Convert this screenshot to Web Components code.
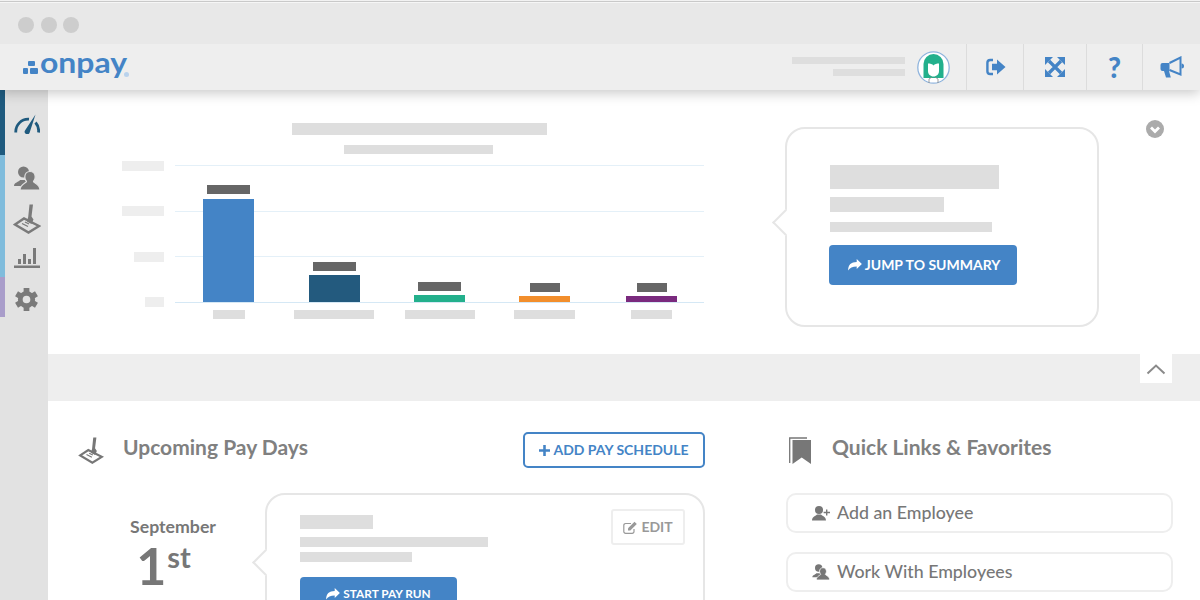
<!DOCTYPE html>
<html lang="en">
<head>
<meta charset="utf-8">
<title>OnPay dashboard</title>
<style>
  html, body { margin: 0; padding: 0; }
  body { width: 1200px; height: 600px; overflow: hidden; background: #fff; font-family: Lato, "Liberation Sans", sans-serif; }
</style>
</head>
<body>
<app-shell>
  <window-bar></window-bar>
  <top-nav></top-nav>
  <side-nav></side-nav>
  <summary-panel></summary-panel>
  <collapse-band></collapse-band>
  <div class="lower" style="display:flex;padding:31px 0 0 30px">
    <pay-days></pay-days>
    <quick-links></quick-links>
  </div>
</app-shell>

<script>
const ICONS = {
  gauge: { box: '0 0 26 20', body: `<g fill="none" stroke="currentColor" stroke-width="2.800"><path d="M1.800 18.500A12.500 12.500 0 0 1 15 5.200"/><path d="M21.500 8.500A12.500 12.500 0 0 1 24.500 18.500"/></g><path fill="currentColor" d="M11 16.500L21.500.5 15.500 19a2.500 2.500 0 0 1-4.500-2.500z"/>` },
  people: { box: '0 0 26 24', body: `<circle cx="9.500" cy="6" r="5.500" fill="currentColor"/><path fill="currentColor" d="M0 20c0-3.500 5-4 6-6h7l3 6z"/><path fill="currentColor" stroke="var(--ic-bg,#e2e2e2)" stroke-width="1.200" d="M16 5.500c3.300 0 5.200 2.500 5.200 5.500 0 2-.8 3.500-1.700 4.500 0 1.500 6.500 2.500 6.500 8.500H6c0-6 6.500-7 6.500-8.500-.9-1-1.700-2.500-1.700-4.500 0-3 1.900-5.500 5.200-5.500z"/>` },
  sign: { box: '0 0 28 30', body: `<path fill="none" stroke="currentColor" stroke-width="2.400" d="M2 20.500L11 14.500 26 22 15.500 28.500z"/><path fill="none" stroke="currentColor" stroke-width="1.300" d="M9 19.500l6 3M12 18l4 2"/><path fill="currentColor" d="M16.500.5h3.500l-1.500 12 2 3-2 4.500-4.500-2.500 1.200-4.500z"/>` },
  stats: { box: '0 0 26 21', body: `<g fill="currentColor"><rect x="0" y="18.500" width="26" height="2.500"/><rect x="4" y="12" width="3" height="5"/><rect x="9" y="7" width="3" height="10"/><rect x="14" y="12" width="3" height="5"/><rect x="19" y="1" width="3" height="16"/></g>` },
  gear: { box: '0 0 24 24', body: `<circle cx="12" cy="12" r="6.500" fill="none" stroke="currentColor" stroke-width="5"/><g fill="currentColor"><rect x="9" y="0" width="6" height="5"/><rect x="9" y="19" width="6" height="5"/><rect x="9" y="0" width="6" height="5" transform="rotate(60 12 12)"/><rect x="9" y="19" width="6" height="5" transform="rotate(60 12 12)"/><rect x="9" y="0" width="6" height="5" transform="rotate(120 12 12)"/><rect x="9" y="19" width="6" height="5" transform="rotate(120 12 12)"/></g>` },
  signout: { box: '0 0 20 18', body: `<path fill="none" stroke="currentColor" stroke-width="2.400" d="M7 2H4.200a2.800 2.800 0 0 0-2.800 2.800v8.400A2.800 2.800 0 0 0 4.200 16H7"/><path fill="currentColor" d="M6 5.800h5V1.500L19.500 9 11 16.500v-4.300H6z"/>` },
  expand: { box: '0 0 20 20', body: `<path stroke="currentColor" stroke-width="3.200" d="M4 4l12 12M16 4L4 16"/><path fill="currentColor" d="M0 0h8L0 8zM20 0v8l-8-8zM0 20v-8l8 8zM20 20h-8l8-8z"/>` },
  horn: { box: '0 0 24 22', body: `<path fill="currentColor" d="M.5 9a2 2 0 0 1 2-2H9.500v8H9l1.800 6.500H6L4 15H2.500a2 2 0 0 1-2-2z"/><path fill="none" stroke="currentColor" stroke-width="2" d="M9.500 7L20.500 1.500v17L9.500 14"/><path fill="currentColor" d="M21.500 7.500a2 2 0 0 1 0 5z"/>` },
  share: { box: '0 0 16 14', body: `<path fill="currentColor" d="M16 5.800L10 0v3.400C3.500 3.400 0 6.500 0 13.500 2 10 5 8.800 10 8.800v3z"/>` },
  plus: { box: '0 0 12 12', body: `<path fill="currentColor" d="M4.600 0h2.800v4.600H12v2.800H7.400V12H4.600V7.400H0V4.600h4.600z"/>` },
  edit: { box: '0 0 15 13', body: `<path fill="none" stroke="currentColor" stroke-width="1.200" d="M11 8v2.500A1.800 1.800 0 0 1 9.200 12.300H2.600A1.800 1.800 0 0 1 .8 10.500V4.300A1.800 1.800 0 0 1 2.600 2.500H8"/><path fill="currentColor" d="M5 7.300L11.500.8l2.300 2.300-6.500 6.500H5z"/>` },
  bookmarks: { box: '0 0 22 27', body: `<path fill="none" stroke="currentColor" stroke-width="1.300" d="M.7 26V1H18"/><path fill="currentColor" d="M3.500 3H22v24l-9.300-6.500L3.500 27z"/>` },
  useradd: { box: '0 0 18 15', body: `<circle cx="7" cy="4.500" r="4" fill="currentColor"/><path fill="currentColor" d="M0 15c0-4 4-4.500 5-6h4c1 1.500 5 2 5 6z"/><path fill="currentColor" d="M14 4h1.400v2.300H18v1.400h-2.600V10H14V7.700h-2.400V6.300H14z"/>` }
};

class AppIcon extends HTMLElement {
  constructor() {
    super();
    this.shadowDOM = this.attachShadow({ mode: 'open' });
  }

  connectedCallback() {
    const icon = ICONS[this.getAttribute('name')];
    this.shadowDOM.innerHTML = `
      <style>
        :host { display: block; line-height: 0; flex: none; }
        svg { display: block; width: 100%; height: 100%; }
      </style>
      <svg viewBox="${icon.box}" aria-hidden="true">${icon.body}</svg>
    `;
  }
}

class PhBar extends HTMLElement {
  constructor() {
    super();
    this.shadowDOM = this.attachShadow({ mode: 'open' });
  }

  connectedCallback() {
    this.style.width = this.getAttribute('w') + 'px';
    this.style.height = this.getAttribute('h') + 'px';
    this.shadowDOM.innerHTML = `
      <style>
        :host { display: block; flex: none; background: var(--ph, #dedede); }
      </style>
    `;
  }
}

class AppShell extends HTMLElement {
  constructor() {
    super();
    this.shadowDOM = this.attachShadow({ mode: 'open' });
  }

  connectedCallback() {
    this.shadowDOM.innerHTML = `
      <style>
        :host { display: block; width: 1200px; height: 600px; overflow: hidden; }
        .body { display: flex; height: 510px; }
        .main { flex: 1; min-width: 0; }
        ::slotted(top-nav) { position: relative; z-index: 2; }
      </style>
      <slot name="head"></slot>
      <div class="body">
        <slot name="side"></slot>
        <div class="main"><slot></slot></div>
      </div>
    `;
    this.querySelector('window-bar').slot = 'head';
    this.querySelector('top-nav').slot = 'head';
    this.querySelector('side-nav').slot = 'side';
  }
}

class WindowBar extends HTMLElement {
  constructor() {
    super();
    this.shadowDOM = this.attachShadow({ mode: 'open' });
  }

  connectedCallback() {
    this.shadowDOM.innerHTML = `
      <style>
        :host {
          display: flex; align-items: center; gap: 6.500px; height: 44px; box-sizing: border-box;
          padding: 6px 0 0 18px;
          background: linear-gradient(#f2f2f2 0 1px, #c9c9c9 1px 2px, #f6f6f6 2px 3px, #e8e8e8 3px);
        }
        i { width: 16px; height: 16px; border-radius: 50%; background: #cdcdcd; }
      </style>
      <i></i><i></i><i></i>
    `;
  }
}

class TopNav extends HTMLElement {
  constructor() {
    super();
    this.shadowDOM = this.attachShadow({ mode: 'open' });
  }

  connectedCallback() {
    this.shadowDOM.innerHTML = `
      <style>
        :host {
          display: flex; align-items: stretch; height: 46px; background: #eeeeee;
          box-shadow: 0 3px 12px rgba(0, 0, 0, .22);
          clip-path: inset(0 0 -30px 0);
        }
        .logo { display: flex; align-items: center; padding-left: 23px; color: #4484c6; }
        .marks { position: relative; width: 15px; height: 13px; margin-top: 1px; }
        .marks i { position: absolute; background: currentColor; border-radius: 1px; }
        .word {
          display: inline-block; width: 85px; white-space: nowrap;
          font: 700 29px/1 Lato, sans-serif; margin: -11px 0 0 2px;
          transform: scaleX(1.1); transform-origin: left center;
        }
        .reg { width: 5px; height: 5px; border-radius: 50%; background: #b9d2ec; margin: 14px 0 0 -1px; }
        .user { margin-left: auto; display: flex; flex-direction: column; align-items: flex-end; gap: 5px; justify-content: center; padding-bottom: 2px; margin-right: 12px; }
        .avatar { width: 33px; height: 33px; align-self: center; margin-right: 16px; }
        .avatar svg { display: block; width: 100%; height: 100%; }
        .tool { display: flex; align-items: center; justify-content: center; border-left: 1px solid #dcdcdc; color: #4484c6; height: 46px; box-sizing: border-box; }
        .q { font: 900 28px/1 Lato, sans-serif; }
      </style>
      <div class="logo">
        <div class="marks">
          <i style="left:5px;top:0;width:7px;height:5px"></i>
          <i style="left:0;top:7px;width:5px;height:6px"></i>
          <i style="left:7px;top:7px;width:8px;height:6px"></i>
        </div>
        <span class="word">onpay</span>
        <span class="reg"></span>
      </div>
      <div class="user">
        <ph-bar w="113" h="7"></ph-bar>
        <ph-bar w="72" h="7"></ph-bar>
      </div>
      <div class="avatar">
        <svg viewBox="0 0 33 33" aria-hidden="true">
          <circle cx="16.500" cy="16.500" r="15.700" fill="#fff" stroke="#8fb4dd" stroke-width="1.300"/>
          <path fill="#23b08c" d="M6.500 27V13a10 10 0 0 1 20 0V27z"/>
          <path fill="#fff" d="M11 12.500c2 0 4.500.5 5.500 2 1-1.500 3.500-2 5.500-2v7.500c0 3.200-2.400 5.500-5.500 5.500S11 23.200 11 20z"/>
          <path fill="none" stroke="#888" stroke-width=".8" d="M12 32v-4l3-2M21 32v-4l-3-2"/>
        </svg>
      </div>
      <div class="tool" style="width:57px"><app-icon name="signout" style="width:20px;height:18px;margin-left:2px"></app-icon></div>
      <div class="tool" style="width:63px"><app-icon name="expand" style="width:20px;height:20px"></app-icon></div>
      <div class="tool" style="width:56px"><span class="q">?</span></div>
      <div class="tool" style="width:58px"><app-icon name="horn" style="width:24px;height:22px"></app-icon></div>
    `;
  }
}

class SideNav extends HTMLElement {
  constructor() {
    super();
    this.shadowDOM = this.attachShadow({ mode: 'open' });
  }

  connectedCallback() {
    this.shadowDOM.innerHTML = `
      <style>
        :host { display: flex; width: 48px; flex: none; background: #e2e2e2; color: #7a7a7a; --ic-bg: #e2e2e2; }
        .strip { width: 5px; display: flex; flex-direction: column; }
        .strip i { display: block; }
        .icons { flex: 1; display: flex; flex-direction: column; align-items: center; padding: 24px 0 0 0; }
      </style>
      <div class="strip">
        <i style="height:65px;background:#1f5a7e"></i>
        <i style="height:122px;background:#80bcdc"></i>
        <i style="height:40px;background:#a99dca"></i>
      </div>
      <div class="icons">
        <app-icon name="gauge" style="width:26px;height:20px;color:#1f5a7e"></app-icon>
        <app-icon name="people" style="width:26px;height:24px;margin-top:32px"></app-icon>
        <app-icon name="sign" style="width:28px;height:30px;margin-top:14px"></app-icon>
        <app-icon name="stats" style="width:26px;height:21px;margin-top:13px"></app-icon>
        <app-icon name="gear" style="width:23px;height:23px;margin-top:20px"></app-icon>
      </div>
    `;
  }
}

class ChartCol extends HTMLElement {
  constructor() {
    super();
    this.shadowDOM = this.attachShadow({ mode: 'open' });
  }

  connectedCallback() {
    const bar = this.getAttribute('bar');
    const value = this.getAttribute('value');
    const label = this.getAttribute('label');
    const height = this.getAttribute('height');
    const gap = this.getAttribute('gap') || '4';
    this.shadowDOM.innerHTML = `
      <style>
        :host { display: flex; flex-direction: column; align-items: center; justify-content: flex-end; position: relative; }
        .val { --ph: #666; margin-bottom: ${gap}px; }
        .bar { width: 51px; height: ${height}px; background: ${bar}; flex: none; }
        .lab { margin-top: 8px; }
      </style>
      <ph-bar class="val" w="${value}" h="9"></ph-bar>
      <div class="bar"></div>
      <ph-bar class="lab" w="${label}" h="9"></ph-bar>
    `;
  }
}

class SummaryChart extends HTMLElement {
  constructor() {
    super();
    this.shadowDOM = this.attachShadow({ mode: 'open' });
  }

  connectedCallback() {
    this.shadowDOM.innerHTML = `
      <style>
        :host { display: block; width: 582px; flex: none; margin: 33px 0 0 74px; }
        .titles { width: 594px; display: flex; flex-direction: column; align-items: center; gap: 10px; }
        .chart { display: flex; margin-top: 7px; }
        .axis { width: 42px; height: 146px; display: flex; flex-direction: column; justify-content: space-between; align-items: flex-end; --ph: #eeeeee; }
        .plot { position: relative; margin: 4px 0 0 11px; width: 529px; height: 154px; }
        .lines { position: absolute; left: 0; right: 0; top: 0; height: 138px; display: flex; flex-direction: column; justify-content: space-between; }
        .lines i { display: block; height: 1px; background: #e4f0f8; }
        .lines i:last-child { background: #d5e8f5; }
        .cols { position: relative; height: 100%; display: grid; grid-template-columns: 107px 104px 107px 103px 111px; }
      </style>
      <div class="titles">
        <ph-bar w="255" h="12"></ph-bar>
        <ph-bar w="149" h="9" style="margin-right:1px"></ph-bar>
      </div>
      <div class="chart">
        <div class="axis">
          <ph-bar w="42" h="10"></ph-bar>
          <ph-bar w="42" h="10"></ph-bar>
          <ph-bar w="30" h="10"></ph-bar>
          <ph-bar w="19" h="10"></ph-bar>
        </div>
        <div class="plot">
          <div class="lines"><i></i><i></i><i></i><i></i></div>
          <div class="cols">
            <chart-col bar="#4484c6" height="103" gap="5" value="43" label="32"></chart-col>
            <chart-col bar="#235a7e" height="27" value="43" label="80"></chart-col>
            <chart-col bar="#23b08c" height="7" value="43" label="70"></chart-col>
            <chart-col bar="#f28e2c" height="6" value="30" label="61"></chart-col>
            <chart-col bar="#7a2a7e" height="6" value="30" label="41"></chart-col>
          </div>
        </div>
      </div>
    `;
  }
}

class SpeechCard extends HTMLElement {
  constructor() {
    super();
    this.shadowDOM = this.attachShadow({ mode: 'open' });
  }

  connectedCallback() {
    this.shadowDOM.innerHTML = `
      <style>
        :host {
          display: block; position: relative; box-sizing: border-box; flex: none;
          background: #fff; border: 2px solid #e6e6e6; border-radius: 20px;
        }
        .tail {
          position: absolute; left: -11px; top: var(--tail-y, 84px); width: 19px; height: 19px;
          background: #fff; border-left: 2px solid #e6e6e6; border-bottom: 2px solid #e6e6e6;
          box-sizing: border-box; transform: rotate(45deg);
        }
      </style>
      <div class="tail"></div>
      <slot></slot>
    `;
  }
}

class ActionButton extends HTMLElement {
  constructor() {
    super();
    this.shadowDOM = this.attachShadow({ mode: 'open' });
  }

  connectedCallback() {
    const size = this.getAttribute('size') || '14';
    this.shadowDOM.innerHTML = `
      <style>
        :host {
          display: flex; align-items: center; justify-content: center; gap: 3px; box-sizing: border-box;
          background: #4484c6; color: #fff; border-radius: 4px;
          font: 700 ${size}px/1 Lato, sans-serif;
        }
        app-icon { width: 14px; height: 12px; }
      </style>
      <app-icon name="share"></app-icon><slot></slot>
    `;
  }
}

class SummaryPanel extends HTMLElement {
  constructor() {
    super();
    this.shadowDOM = this.attachShadow({ mode: 'open' });
  }

  connectedCallback() {
    this.shadowDOM.innerHTML = `
      <style>
        :host { display: flex; height: 264px; background: #fff; align-items: flex-start; }
        speech-card { width: 314px; height: 200px; margin: 37px 0 0 81px; padding: 36px 0 0 43px; --tail-y: 84px; }
        .stack { display: flex; flex-direction: column; }
        action-button { width: 188px; height: 40px; margin-top: 13px; margin-left: -1px; padding-left: 2px; }
        .toggle { width: 18px; height: 18px; margin: 30px 0 0 47px; flex: none; }
        .toggle svg { display: block; width: 100%; height: 100%; }
      </style>
      <summary-chart></summary-chart>
      <speech-card>
        <div class="stack">
          <ph-bar w="169" h="24"></ph-bar>
          <ph-bar w="114" h="15" style="margin-top:8px"></ph-bar>
          <ph-bar w="162" h="10" style="margin-top:10px"></ph-bar>
          <action-button>JUMP TO SUMMARY</action-button>
        </div>
      </speech-card>
      <div class="toggle">
        <svg viewBox="0 0 18 18" aria-hidden="true">
          <circle cx="9" cy="9" r="9" fill="#ababab"/>
          <path d="M5 7.500l4 4 4-4" fill="none" stroke="#fff" stroke-width="2.800"/>
        </svg>
      </div>
    `;
  }
}

class CollapseBand extends HTMLElement {
  constructor() {
    super();
    this.shadowDOM = this.attachShadow({ mode: 'open' });
  }

  connectedCallback() {
    this.shadowDOM.innerHTML = `
      <style>
        :host { display: flex; justify-content: flex-end; height: 47px; background: #eeeeee; padding-right: 28px; }
        .tab { width: 32px; height: 29px; background: #fff; display: flex; align-items: center; justify-content: center; }
        svg { width: 20px; height: 12px; display: block; }
      </style>
      <div class="tab">
        <svg viewBox="0 0 20 12" aria-hidden="true"><path d="M1.500 10.500L10 2.500l8.500 8" fill="none" stroke="#8a8a8a" stroke-width="2"/></svg>
      </div>
    `;
  }
}

class SectionHead extends HTMLElement {
  constructor() {
    super();
    this.shadowDOM = this.attachShadow({ mode: 'open' });
  }

  connectedCallback() {
    this.shadowDOM.innerHTML = `
      <style>
        :host { display: flex; align-items: center; height: 36px; color: #777; }
        h2 { margin: 0 0 8px; font: 700 21px/1 Lato, sans-serif; color: #808080; }
        ::slotted(*) { flex: none; }
      </style>
      <slot name="icon"></slot>
      <h2><slot></slot></h2>
      <slot name="action"></slot>
    `;
  }
}

class PayDays extends HTMLElement {
  constructor() {
    super();
    this.shadowDOM = this.attachShadow({ mode: 'open' });
  }

  connectedCallback() {
    this.shadowDOM.innerHTML = `
      <style>
        :host { display: block; width: 627px; flex: none; color: #777; --ic-bg: #fff; }
        .add {
          margin-left: auto; width: 182px; height: 36px; box-sizing: border-box; border: 2px solid #4484c6; border-radius: 5px;
          color: #4484c6; font: 700 14px/1 Lato, sans-serif; display: flex; align-items: center; justify-content: center; gap: 3px;
        }
        .row { display: flex; margin-top: 25px; }
        .date { width: 187px; box-sizing: border-box; padding: 24px 0 0 3px; text-align: center; flex: none; color: #777; }
        .month { font: 700 17.700px/20px Lato, sans-serif; }
        .day { font: 700 52px/50px Lato, sans-serif; margin-top: 3px; padding-right: 19px; }
        .day sup { font-size: 29px; line-height: 0; vertical-align: 17px; margin-left: 1px; }
        speech-card { width: 440px; height: 170px; padding: 20px 0 0 33px; --tail-y: 58px; }
        .top { display: flex; justify-content: space-between; padding-right: 18px; }
        .bars { display: flex; flex-direction: column; }
        .edit {
          width: 74px; height: 36px; box-sizing: border-box; border: 2px solid #eeeeee; border-radius: 3px; margin-top: -6px;
          color: #999; font: 700 14px/1 Lato, sans-serif; display: flex; align-items: center; justify-content: center; gap: 3px;
        }
        action-button { width: 157px; height: 33px; margin-top: 15px; }
      </style>
      <section-head>
        <app-icon slot="icon" name="sign" style="width:26px;height:27px;margin-right:19px"></app-icon>
        Upcoming Pay Days
        <div slot="action" class="add"><app-icon name="plus" style="width:11px;height:11px"></app-icon>ADD PAY SCHEDULE</div>
      </section-head>
      <div class="row">
        <div class="date">
          <div class="month">September</div>
          <div class="day">1<sup>st</sup></div>
        </div>
        <speech-card>
          <div class="top">
            <div class="bars">
              <ph-bar w="73" h="14"></ph-bar>
              <ph-bar w="188" h="10" style="margin-top:8px"></ph-bar>
              <ph-bar w="112" h="10" style="margin-top:5px"></ph-bar>
            </div>
            <div class="edit"><app-icon name="edit" style="width:15px;height:13px"></app-icon>EDIT</div>
          </div>
          <action-button size="11.800">START PAY RUN</action-button>
        </speech-card>
      </div>
    `;
  }
}

class LinkRow extends HTMLElement {
  constructor() {
    super();
    this.shadowDOM = this.attachShadow({ mode: 'open' });
  }

  connectedCallback() {
    this.shadowDOM.innerHTML = `
      <style>
        :host {
          display: flex; align-items: center; height: 40px; box-sizing: border-box; padding-left: 24px; gap: 7px;
          border: 2px solid #eeeeee; border-radius: 10px; color: #777;
          font: 500 17.800px/1 Lato, sans-serif; --ic-bg: #fff;
        }
        ::slotted(app-icon) { width: 18px; height: 16px; }
      </style>
      <slot name="icon"></slot><slot></slot>
    `;
  }
}

class QuickLinks extends HTMLElement {
  constructor() {
    super();
    this.shadowDOM = this.attachShadow({ mode: 'open' });
  }

  connectedCallback() {
    this.shadowDOM.innerHTML = `
      <style>
        :host { display: block; width: 387px; flex: none; margin-left: 81px; }
        .links { display: flex; flex-direction: column; gap: 19px; margin-top: 25px; }
      </style>
      <section-head>
        <app-icon slot="icon" name="bookmarks" style="width:22px;height:27px;margin:0 21px 0 3px"></app-icon>
        Quick Links &amp; Favorites
      </section-head>
      <div class="links">
        <link-row><app-icon slot="icon" name="useradd"></app-icon>Add an Employee</link-row>
        <link-row><app-icon slot="icon" name="people"></app-icon>Work With Employees</link-row>
      </div>
    `;
  }
}

customElements.define('app-icon', AppIcon);
customElements.define('ph-bar', PhBar);
customElements.define('chart-col', ChartCol);
customElements.define('summary-chart', SummaryChart);
customElements.define('speech-card', SpeechCard);
customElements.define('action-button', ActionButton);
customElements.define('summary-panel', SummaryPanel);
customElements.define('collapse-band', CollapseBand);
customElements.define('section-head', SectionHead);
customElements.define('link-row', LinkRow);
customElements.define('pay-days', PayDays);
customElements.define('quick-links', QuickLinks);
customElements.define('window-bar', WindowBar);
customElements.define('top-nav', TopNav);
customElements.define('side-nav', SideNav);
customElements.define('app-shell', AppShell);
</script>
</body>
</html>
